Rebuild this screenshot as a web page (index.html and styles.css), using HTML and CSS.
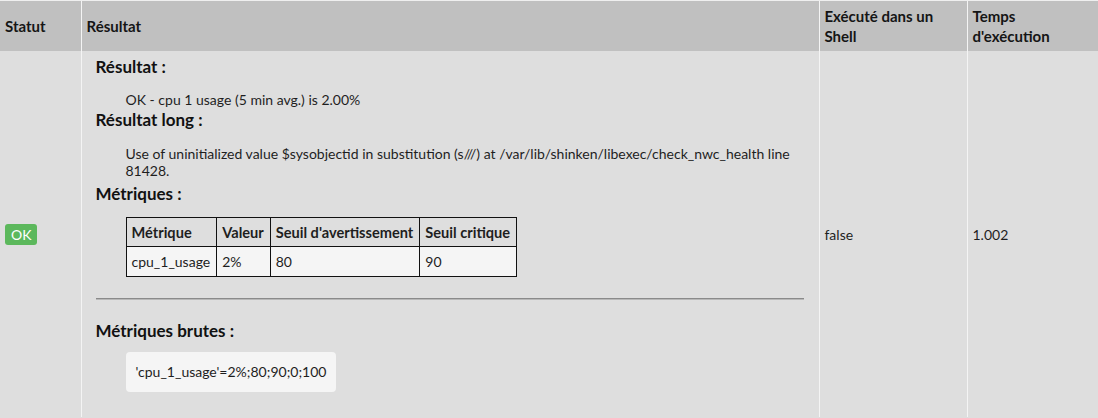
FILE: index.html
```html
<!DOCTYPE html>
<html lang="fr">
<head>
<meta charset="utf-8">
<link rel="stylesheet" href="styles.css">
</head>
<body>
<table class="grid">
  <colgroup>
    <col class="c-status">
    <col class="c-result">
    <col class="c-shell">
    <col class="c-time">
  </colgroup>
  <thead>
    <tr>
      <th>Statut</th>
      <th>Résultat</th>
      <th>Exécuté dans un Shell</th>
      <th>Temps d'exécution</th>
    </tr>
  </thead>
  <tbody>
    <tr>
      <td class="status"><span class="badge">OK</span></td>
      <td class="result">
        <h4 class="h-first">Résultat :</h4>
        <p class="out">OK - cpu 1 usage (5 min avg.) is 2.00%</p>
        <h4 class="h-long">Résultat long :</h4>
        <p class="long">Use of uninitialized value $sysobjectid in substitution (s///) at /var/lib/shinken/libexec/check_nwc_health line 81428.</p>
        <h4 class="h-metrics">Métriques :</h4>
        <table class="metrics">
          <thead>
            <tr><th>Métrique</th><th>Valeur</th><th>Seuil d'avertissement</th><th>Seuil critique</th></tr>
          </thead>
          <tbody>
            <tr><td>cpu_1_usage</td><td>2%</td><td>80</td><td>90</td></tr>
          </tbody>
        </table>
        <hr class="sep">
        <h4 class="h-raw">Métriques brutes :</h4>
        <code class="raw">'cpu_1_usage'=2%;80;90;0;100</code>
      </td>
      <td class="plain">false</td>
      <td class="plain">1.002</td>
    </tr>
  </tbody>
</table>
</body>
</html>
```

FILE: styles.css
```css
html, body {
  margin: 0;
  padding: 0;
  background: #dedede;
}
body {
  font-family: Lato, "Open Sans", sans-serif;
  color: #1e1e1e;
  font-size: 14px;
  border-top: 1px solid #efefef;
}
.grid {
  border-collapse: collapse;
  width: 1098px;
  table-layout: fixed;
}
.c-status { width: 81px; }
.c-result { width: 738px; }
.c-shell { width: 148px; }
.c-time { width: 131px; }

.grid > thead > tr { height: 50px; }
.grid > thead > tr > th {
  background: #c0c0c0;
  text-align: left;
  font-weight: 700;
  font-size: 15px;
  line-height: 20px;
  padding: 0 5px;
  border-left: 1px solid #f4f4f4;
  color: #151515;
}
.grid > thead > tr > th:first-child { border-left: none; }

.grid > tbody > tr { height: 366px; }
.grid > tbody > tr > td {
  border-left: 1px solid #f4f4f4;
  padding: 0 5px;
  vertical-align: middle;
}
.grid > tbody > tr > td:first-child { border-left: none; }

.badge {
  display: inline-block;
  background: #5cb85c;
  color: #fff;
  font-size: 14px;
  line-height: 21px;
  padding: 0 6px;
  border-radius: 3px;
}

.grid > tbody > tr > td.result {
  vertical-align: top;
  padding: 6px 15px 0 14px;
}

.result h4 {
  margin: 0;
  font-size: 17px;
  line-height: 20px;
  font-weight: 700;
  color: #111;
}
.result p { margin: 0; padding-left: 30px; }
.out { margin-top: 13px !important; line-height: 20px; }
.h-long { margin-top: 0 !important; }
.long { margin-top: 15px !important; line-height: 17px; }
.h-metrics { margin-top: 5px !important; }

.metrics {
  margin: 13px 0 0 30px;
  border-collapse: collapse;
  font-size: 14px;
}
.metrics th, .metrics td {
  border: 1px solid #111;
  padding: 0 6px 0 5px;
  text-align: left;
  white-space: nowrap;
}
.metrics tr.head, .metrics thead tr { height: 29px; }
.metrics tbody tr { height: 30px; }
.metrics th {
  font-size: 14.6px;
  font-weight: 700;
  background: #dedede;
}
.metrics td {
  background: #f5f5f5;
}

.sep {
  margin: 21px 0 0 0;
  border: none;
  border-top: 1px solid #8a8a8a;
  border-bottom: 1px solid #b8b8b8;
  height: 0;
}
.h-raw { margin-top: 21px !important; }
.raw {
  display: inline-block;
  margin: 11px 0 0 30px;
  background: #f5f5f5;
  border-radius: 4px;
  padding: 0 10px;
  line-height: 40px;
  font-family: Lato, "Open Sans", sans-serif;
  font-size: 14px;
}
```
